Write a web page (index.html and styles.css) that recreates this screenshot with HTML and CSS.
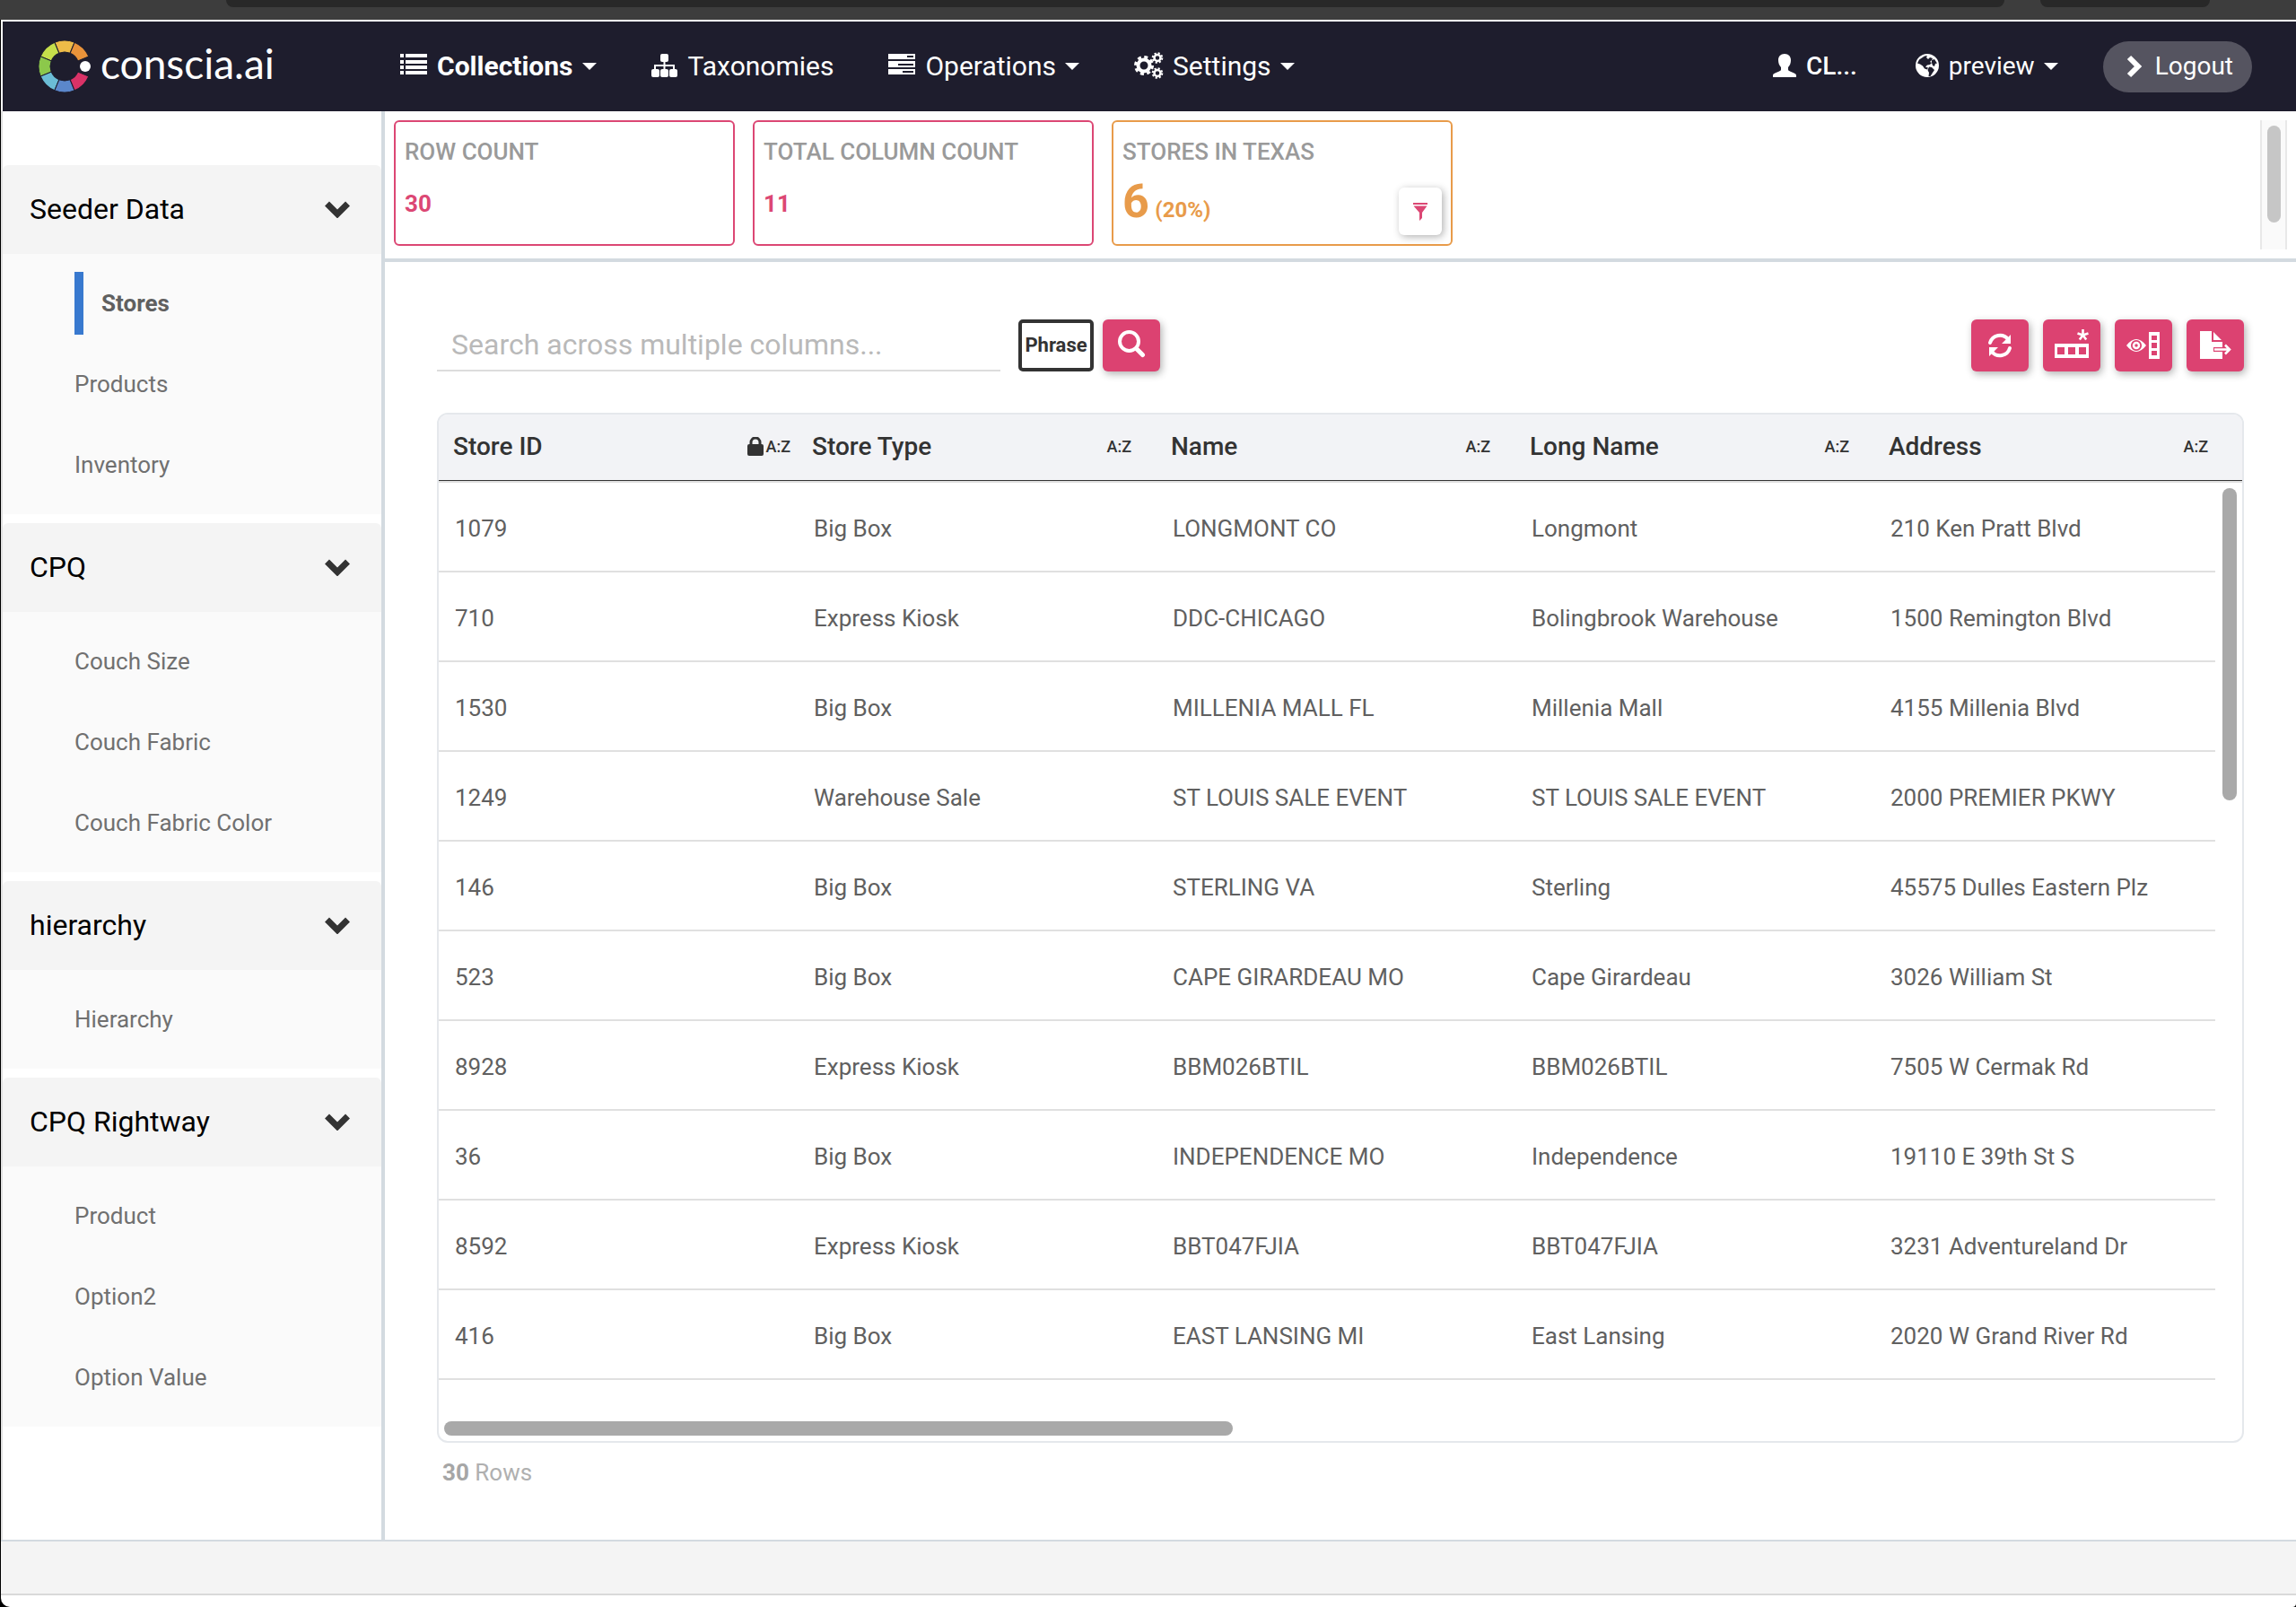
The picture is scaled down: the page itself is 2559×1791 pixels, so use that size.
FILE: index.html
```html
<!DOCTYPE html>
<html lang="en">
<head>
<meta charset="utf-8">
<title>conscia.ai - Stores</title>
<link rel="stylesheet" href="styles.css">
</head>
<body>
<div class="browser-bar"><span class="address-pill"></span><span class="profile-pill"></span></div>
<div class="window">
  <header class="topbar">
    <a class="logo" href="#">
      <svg width="60" height="60" viewBox="-30 -30 60 60" aria-hidden="true">
        <g stroke="#1e1d2d" stroke-width="1">
          <path fill="#edbb48" d="M-11.1-26.8A29 29 0 0 1 11.1-26.8L6.1-14.8A16 16 0 0 0-6.1-14.8Z"/>
          <path fill="#e9933a" transform="rotate(45)" d="M-11.1-26.8A29 29 0 0 1 11.1-26.8L6.1-14.8A16 16 0 0 0-6.1-14.8Z"/>
          <path fill="#c6df4b" transform="rotate(-45)" d="M-11.1-26.8A29 29 0 0 1 11.1-26.8L6.1-14.8A16 16 0 0 0-6.1-14.8Z"/>
          <path fill="#8cc84b" transform="rotate(-90)" d="M-11.1-26.8A29 29 0 0 1 11.1-26.8L6.1-14.8A16 16 0 0 0-6.1-14.8Z"/>
          <path fill="#6bbdd6" transform="rotate(-135)" d="M-11.1-26.8A29 29 0 0 1 11.1-26.8L6.1-14.8A16 16 0 0 0-6.1-14.8Z"/>
          <path fill="#5b87cb" transform="rotate(180)" d="M-11.1-26.8A29 29 0 0 1 11.1-26.8L6.1-14.8A16 16 0 0 0-6.1-14.8Z"/>
          <path fill="#da3267" transform="rotate(135)" d="M-11.1-26.8A29 29 0 0 1 11.1-26.8L6.1-14.8A16 16 0 0 0-6.1-14.8Z"/>
        </g>
        <circle cx="23" cy="0" r="6" fill="#fff"/>
      </svg>
      <span>conscia.ai</span>
    </a>
    <nav class="nav">
      <button class="nav-item current">
        <svg width="32" height="32" viewBox="0 0 32 32" aria-hidden="true"><path d="M1 2h4v4H1zM7 2h24v4H7zM1 9h4v4H1zM7 9h24v4H7zM1 15h4v4H1zM7 15h24v4H7zM1 21h4v4H1zM7 21h24v4H7z"/></svg>
        Collections<i class="caret"></i>
      </button>
      <a class="nav-item" href="#">
        <svg width="32" height="32" viewBox="0 0 32 32" aria-hidden="true"><rect x="11" y="2" width="9" height="9" rx="2"/><rect x="1" y="19" width="9" height="9" rx="2"/><rect x="11" y="19" width="9" height="9" rx="2"/><rect x="21" y="19" width="9" height="9" rx="2"/><path d="M5 20v-5h21v5M15.500 10v10" fill="none" stroke="currentColor" stroke-width="2"/></svg>
        Taxonomies
      </a>
      <button class="nav-item">
        <svg width="32" height="32" viewBox="0 0 32 32" aria-hidden="true"><path fill-rule="evenodd" d="M1 2h30v6H1zM22 4v2h7V4zM1 10h30v7H1zM12 13v2h17v-2zM1 19h30v6H1zM17 21v2h12v-2z"/></svg>
        Operations<i class="caret"></i>
      </button>
      <button class="nav-item">
        <svg width="34" height="32" viewBox="0 0 34 32" aria-hidden="true"><g fill="none" stroke="currentColor"><circle cx="12" cy="15" r="6.500" stroke-width="4"/><circle cx="12" cy="15" r="9.500" stroke-width="3" stroke-dasharray="4 3.460"/><circle cx="27" cy="6.500" r="3.500" stroke-width="2.500"/><circle cx="27" cy="6.500" r="5.300" stroke-width="2" stroke-dasharray="2.160 2"/><circle cx="27" cy="23.500" r="3.500" stroke-width="2.500"/><circle cx="27" cy="23.500" r="5.300" stroke-width="2" stroke-dasharray="2.160 2"/></g></svg>
        Settings<i class="caret"></i>
      </button>
    </nav>
    <div class="account">
      <button class="nav-item user">
        <svg width="28" height="28" viewBox="0 0 28 28" aria-hidden="true"><path d="M14 0C9.500 0 7 3 7 7c0 3 1 6 3 8v2.500c0 1-1 1.500-2 2-3 1.200-7 2.500-7 4.500v2h26v-2c0-2-4-3.300-7-4.500-1-.5-2-1-2-2V15c2-2 3-5 3-8 0-4-2.500-7-7-7z"/></svg>
        CL...
      </button>
      <button class="nav-item">
        <svg width="28" height="28" viewBox="0 1 28 28" aria-hidden="true"><circle cx="14" cy="14" r="13"/><path fill="#1e1d2d" d="M5 7.500L11 3.500l3-.5-1 2 2 2 2-2 3 1-1 2-2 2 2 1-2 2-3 .5-2 2 3 1-1 2-3-1-2-3-3-2-3-1zM19 8l3-1 3 4.500-2 .5-1 3-2-1-1-3zM16 15.500l3 .5 3 3-2 3-2.500 4-2 0 .5-4-1.500-3z"/></svg>
        preview<i class="caret"></i>
      </button>
      <button class="logout">
        <svg width="18" height="26" viewBox="0 0 18 26" aria-hidden="true"><path d="M3 3l10 10L3 23" fill="none" stroke="currentColor" stroke-width="6"/></svg>
        Logout
      </button>
    </div>
  </header>

  <div class="workspace">
    <aside class="sidebar">
      <section class="group">
        <button class="group-head">Seeder Data <svg class="chev" width="30" height="20" viewBox="0 0 30 20" aria-hidden="true"><path d="M3.500 4L15 15.500 26.500 4"/></svg></button>
        <ul><li><a class="active" href="#">Stores</a></li><li><a href="#">Products</a></li><li><a href="#">Inventory</a></li></ul>
      </section>
      <section class="group">
        <button class="group-head">CPQ <svg class="chev" width="30" height="20" viewBox="0 0 30 20" aria-hidden="true"><path d="M3.500 4L15 15.500 26.500 4"/></svg></button>
        <ul><li><a href="#">Couch Size</a></li><li><a href="#">Couch Fabric</a></li><li><a href="#">Couch Fabric Color</a></li></ul>
      </section>
      <section class="group">
        <button class="group-head">hierarchy <svg class="chev" width="30" height="20" viewBox="0 0 30 20" aria-hidden="true"><path d="M3.500 4L15 15.500 26.500 4"/></svg></button>
        <ul><li><a href="#">Hierarchy</a></li></ul>
      </section>
      <section class="group">
        <button class="group-head">CPQ Rightway <svg class="chev" width="30" height="20" viewBox="0 0 30 20" aria-hidden="true"><path d="M3.500 4L15 15.500 26.500 4"/></svg></button>
        <ul><li><a href="#">Product</a></li><li><a href="#">Option2</a></li><li><a href="#">Option Value</a></li></ul>
      </section>
    </aside>

    <main class="main">
      <section class="metrics">
        <article class="metric"><h2>ROW COUNT</h2><p>30</p></article>
        <article class="metric"><h2>TOTAL COLUMN COUNT</h2><p>11</p></article>
        <article class="metric orange"><h2>STORES IN TEXAS</h2><p><span class="big">6</span> <span class="share">(20%)</span></p>
          <button class="filter" aria-label="Filter"><svg width="18" height="20" viewBox="0 0 18 20" aria-hidden="true"><path d="M1 0h16v2H1zM1.500 3.500h15L11 11v6l-3 3v-9z"/></svg></button>
        </article>
        <div class="metrics-scroll"><span></span></div>
      </section>

      <section class="content">
        <div class="toolbar">
          <input class="search" type="text" aria-label="Search" placeholder="Search across multiple columns...">
          <button class="phrase">Phrase</button>
          <button class="tool" aria-label="Search"><svg width="36" height="36" viewBox="0 0 36 36" aria-hidden="true"><g fill="none" stroke="#fff"><circle cx="15.500" cy="13.500" r="10.500" stroke-width="4"/><path d="M23.500 21.500l7 7" stroke-width="5" stroke-linecap="round"/></g></svg></button>
          <div class="tools">
            <button class="tool" aria-label="Refresh"><svg width="32" height="32" viewBox="0 0 32 32" aria-hidden="true"><g fill="none" stroke="#fff" stroke-width="4" stroke-linecap="round"><path d="M5 13A11.500 11.500 0 0 1 25 9"/><path d="M27 19A11.500 11.500 0 0 1 7 23"/></g><path fill="#fff" d="M28 4v10H18zM4 28V18h10z"/></svg></button>
            <button class="tool" aria-label="Add column"><svg width="40" height="36" viewBox="0 0 40 36" aria-hidden="true"><path fill="#fff" fill-rule="evenodd" d="M1 16h38v16H1zM4 20v8h8v-8zM16 20v8h8v-8zM28 20v8h8v-8z"/><path d="M32.500 6.500V0M32.500 6.500l6-2M32.500 6.500l-6-2M32.500 6.500l3.700 5M32.500 6.500l-3.700 5" stroke="#fff" stroke-width="2.600" fill="none"/></svg></button>
            <button class="tool" aria-label="Show columns"><svg width="40" height="32" viewBox="0 0 40 32" aria-hidden="true"><path fill="#fff" fill-rule="evenodd" d="M1 16Q12 2 23 16Q12 30 1 16zM12 10a6 6 0 1 0 .01 0z"/><circle cx="12" cy="16" r="3" fill="none" stroke="#fff" stroke-width="2.500"/><path fill="#fff" fill-rule="evenodd" d="M26 1h12v30H26zM29 5v5h6V5zM29 13v6h6v-6zM29 22v5h6v-5z"/></svg></button>
            <button class="tool" aria-label="Export"><svg width="36" height="32" viewBox="0 0 36 32" aria-hidden="true"><path fill="#fff" d="M1 0h13v12h12v6H16v5h10v8H1zM16 1l9 9h-9z"/><path d="M17 20.500h16M29 15.500l5 5-5 5" fill="none" stroke="#fff" stroke-width="2.500"/></svg></button>
          </div>
        </div>

        <div class="grid">
          <table>
            <colgroup><col class="c"><col class="c"><col class="c"><col class="c"><col><col class="gutter"></colgroup>
            <thead><tr>
              <th scope="col"><div class="th locked">Store ID <span><svg width="18" height="22" viewBox="0 0 18 22" aria-hidden="true"><rect x="0" y="8" width="18" height="13" rx="2"/><path d="M4 9V6a5 5 0 0 1 10 0v3" fill="none" stroke="#333" stroke-width="3"/></svg>A:Z</span></div></th>
              <th scope="col"><div class="th">Store Type <span>A:Z</span></div></th>
              <th scope="col"><div class="th">Name <span>A:Z</span></div></th>
              <th scope="col"><div class="th">Long Name <span>A:Z</span></div></th>
              <th scope="col"><div class="th last">Address <span>A:Z</span></div></th>
              <td></td>
            </tr></thead>
            <tbody>
              <tr><td>1079</td><td>Big Box</td><td>LONGMONT CO</td><td>Longmont</td><td>210 Ken Pratt Blvd</td><td class="edge"></td></tr>
              <tr><td>710</td><td>Express Kiosk</td><td>DDC-CHICAGO</td><td>Bolingbrook Warehouse</td><td>1500 Remington Blvd</td></tr>
              <tr><td>1530</td><td>Big Box</td><td>MILLENIA MALL FL</td><td>Millenia Mall</td><td>4155 Millenia Blvd</td></tr>
              <tr><td>1249</td><td>Warehouse Sale</td><td>ST LOUIS SALE EVENT</td><td>ST LOUIS SALE EVENT</td><td>2000 PREMIER PKWY</td></tr>
              <tr><td>146</td><td>Big Box</td><td>STERLING VA</td><td>Sterling</td><td>45575 Dulles Eastern Plz</td></tr>
              <tr><td>523</td><td>Big Box</td><td>CAPE GIRARDEAU MO</td><td>Cape Girardeau</td><td>3026 William St</td></tr>
              <tr><td>8928</td><td>Express Kiosk</td><td>BBM026BTIL</td><td>BBM026BTIL</td><td>7505 W Cermak Rd</td></tr>
              <tr><td>36</td><td>Big Box</td><td>INDEPENDENCE MO</td><td>Independence</td><td>19110 E 39th St S</td></tr>
              <tr><td>8592</td><td>Express Kiosk</td><td>BBT047FJIA</td><td>BBT047FJIA</td><td>3231 Adventureland Dr</td></tr>
              <tr><td>416</td><td>Big Box</td><td>EAST LANSING MI</td><td>East Lansing</td><td>2020 W Grand River Rd</td></tr>
            </tbody>
          </table>
          <span class="vthumb"></span>
          <span class="hthumb"></span>
        </div>
        <p class="count"><b>30</b> Rows</p>
      </section>
    </main>
  </div>
  <footer class="footer"></footer>
</div>
</body>
</html>
```
FILE: styles.css
```css
* { box-sizing: border-box; }

body {
  margin: 0;
  min-height: 100vh;
  display: flex;
  flex-direction: column;
  background: #000;
  font-family: Roboto, "Liberation Sans", sans-serif;
  font-size: 26px;
  line-height: 32px;
  color: #606060;
}

button { font: inherit; color: inherit; background: none; border: 0; padding: 0; margin: 0; }
a { color: inherit; text-decoration: none; }
h2, p, ul { margin: 0; padding: 0; }
ul { list-style: none; }
svg { flex: none; display: block; }

.browser-bar {
  display: flex;
  gap: 40px;
  height: 22px;
  padding: 0 96px 0 252px;
  background: #3d3d3d;
}
.browser-bar span { height: 8px; background: #282828; border-radius: 0 0 16px 16px; }
.address-pill { flex: 1; }
.profile-pill { width: 189px; }

.window {
  flex: 1;
  display: flex;
  flex-direction: column;
  margin-left: 1px;
  padding-bottom: 13px;
  background: #fff;
  border-top: 2px solid #fff;
  border-radius: 0 0 4px 10px;
}

/* Top navigation */
.topbar {
  display: flex;
  align-items: center;
  height: 100px;
  margin-left: 2px;
  padding: 0 49px 0 39px;
  background: #1e1d2d;
  color: #fff;
  fill: #fff;
  font-size: 30px;
}
.logo {
  display: flex;
  align-items: center;
  gap: 10px;
  width: 403px;
  font-family: Lato, sans-serif;
  font-size: 46px;
}
.logo span { padding-bottom: 6px; }
.nav { display: flex; gap: 60px; }
.nav-item { display: flex; align-items: center; gap: 10px; white-space: nowrap; }
.current { font-weight: 700; }
.user { font-weight: 500; }
.caret {
  border: 8px solid transparent;
  border-top-color: #fff;
  border-bottom: 0;
}
.account { display: flex; align-items: center; gap: 64px; margin-left: auto; font-size: 28px; }
.logout {
  display: flex;
  align-items: center;
  gap: 14px;
  height: 57px;
  margin-left: -14px;
  padding: 0 21px 0 26px;
  border-radius: 29px;
  background: #555460;
}

/* Layout */
.workspace { flex: 1; display: flex; }
.sidebar {
  width: 428px;
  flex: none;
  padding-top: 60px;
  border-left: 2px solid #e0e0e0;
  border-right: 4px solid #d3dae0;
}
.group { margin-bottom: 10px; }
.group-head {
  display: flex;
  align-items: center;
  justify-content: space-between;
  width: 100%;
  height: 99px;
  padding: 0 34px 2px 30px;
  background: #f4f4f4;
  border-radius: 6px 6px 0 0;
  color: #000;
  font-size: 32px;
}
.chev { fill: none; stroke: #333; stroke-width: 7; }
.group ul { padding: 10px 0 10px 80px; background: #fafafa; }
.group li { display: flex; align-items: center; height: 90px; }
.group a { line-height: 70px; color: #707070; }
.group .active { padding-left: 20px; border-left: 10px solid #3879cf; font-weight: 700; color: #606060; }

.main { flex: 1; min-width: 0; display: flex; flex-direction: column; }

/* Metric cards */
.metrics {
  display: flex;
  gap: 20px;
  height: 168px;
  padding: 10px;
  border-bottom: 4px solid #d3dae0;
}
.metric {
  position: relative;
  width: 380px;
  height: 140px;
  padding: 17px 10px;
  border: 2px solid #dc4774;
  border-radius: 6px;
  color: #dc4774;
  font-weight: 700;
}
.metric h2 { font-size: 26px; font-weight: 500; line-height: 32px; color: #9a9a9a; margin-bottom: 26px; }
.orange { border-color: #e89b4a; color: #e89b4a; }
.orange h2 { margin-bottom: 16px; }
.big { font-size: 52px; line-height: 48px; }
.share { font-size: 24px; }
.filter {
  position: absolute;
  right: 10px;
  bottom: 10px;
  display: grid;
  place-items: center;
  width: 48px;
  height: 53px;
  border-radius: 6px;
  background: #fff;
  box-shadow: 2px 2px 8px rgba(0, 0, 0, .3);
  fill: #dc4774;
}
.metrics-scroll {
  width: 30px;
  height: 144px;
  margin-left: auto;
  padding: 6px 6px;
  background: #fafafa;
  border: solid #e8e8e8;
  border-width: 0 2px;
}
.metrics-scroll span { display: block; width: 15px; height: 108px; border-radius: 8px; background: #c6c6c6; }

/* Toolbar */
.content { flex: 1; display: flex; flex-direction: column; padding: 64px 58px 59px; }
.toolbar { display: flex; gap: 10px; margin-bottom: 46px; }
.search {
  width: 628px;
  height: 58px;
  margin-right: 10px;
  padding: 0 16px;
  border: 0;
  border-bottom: 2px solid #dcdcdc;
  background: none;
  font: inherit;
  font-size: 32px;
}
.search::placeholder { color: #b9b9b9; opacity: 1; }
.phrase {
  width: 84px;
  height: 58px;
  border: 4px solid #333;
  border-radius: 5px;
  font-size: 22px;
  font-weight: 700;
  color: #333;
}
.tool {
  display: grid;
  place-items: center;
  width: 64px;
  height: 58px;
  border-radius: 6px;
  background: #dc4271;
  box-shadow: 2px 3px 8px rgba(0, 0, 0, .3);
}
.tools { display: flex; gap: 16px; margin-left: auto; }

/* Data table */
.grid {
  position: relative;
  flex: 1;
  overflow: hidden;
  border: 2px solid #e5e8ec;
  border-radius: 12px;
}
table { width: 100%; table-layout: fixed; border-collapse: separate; border-spacing: 0; }
.c { width: 400px; }
.gutter { width: 30px; }
thead th, thead td {
  height: 74px;
  padding: 0;
  background: #f2f3f6;
  border-bottom: 1px solid #333;
  text-align: left;
}
.th {
  display: flex;
  align-items: center;
  justify-content: space-between;
  padding: 0 28px 2px 16px;
  font-size: 28px;
  font-weight: 500;
  color: #333;
}
.th span { display: flex; align-items: center; gap: 2px; font-size: 18px; fill: #333; }
.locked { padding-right: 8px; }
.last { padding-right: 8px; }
tbody td { height: 100px; padding: 4px 0 0 18px; border-bottom: 2px solid #e0e0e0; }
tbody tr:first-child td { height: 102px; border-top: 2px solid #e0e0e0; }
tbody tr:first-child .edge { border-bottom: 0; }
.vthumb, .hthumb { position: absolute; border-radius: 8px; background: #a9a9a9; }
.vthumb { top: 82px; right: 6px; width: 16px; height: 348px; }
.hthumb { bottom: 6px; left: 6px; width: 879px; height: 16px; }
.count { margin-top: 17px; padding-left: 6px; color: #b0b0b0; }
.count b { color: #a6a6a6; }

.footer { height: 62px; background: #f4f4f4; border-top: 2px solid #d3dae0; border-bottom: 2px solid #d9d9d9; }
```
